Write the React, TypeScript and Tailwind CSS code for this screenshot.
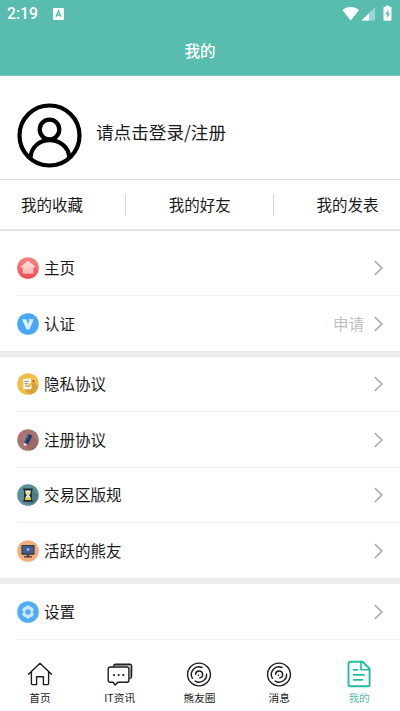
import type { ReactNode } from "react";

const HomeBadge = () => (
  <svg width="22" height="22" viewBox="0 0 22 22">
    <defs>
      <linearGradient id="homeBg" x1="0" y1="0" x2="0" y2="1">
        <stop offset="0" stopColor="#fb8587" />
        <stop offset="1" stopColor="#f2484f" />
      </linearGradient>
      <linearGradient id="homeFg" x1="0" y1="0" x2="0" y2="1">
        <stop offset="0" stopColor="#ffe3e1" />
        <stop offset="1" stopColor="#fdb6b4" />
      </linearGradient>
    </defs>
    <circle cx="11" cy="11" r="10.8" fill="url(#homeBg)" />
    <path
      d="M10.2 4.3a1.2 1.2 0 0 1 1.6 0l6 5c.5.5.2 1.2-.5 1.2h-1v5.2c0 .7-.4 1.1-1.1 1.1H6.8c-.7 0-1.1-.4-1.1-1.1v-5.2h-1c-.7 0-1-.7-.5-1.2z"
      fill="url(#homeFg)"
    />
  </svg>
);

const VerifyBadge = () => (
  <svg width="22" height="22" viewBox="0 0 22 22">
    <circle cx="11" cy="11" r="10.8" fill="#48a7f4" />
    <path
      d="M5 6.2h4.3l1.8 5 1.3-3.4-.8-1.6h5.1l-3.8 9.3c-.3.8-.9 1.1-1.9 1.1s-1.6-.3-1.9-1.1z"
      fill="#d8efff"
    />
  </svg>
);

const NoteBadge = () => (
  <svg width="22" height="22" viewBox="0 0 22 22">
    <circle cx="11" cy="11" r="10.8" fill="#f0bf49" />
    <path d="M14.5 6.5l6.8 6.8A10.8 10.8 0 0 1 13 21.6L6.5 16z" fill="#d9a238" />
    <path d="M6 6l8.2-.4.4 10.3-8.2.5z" fill="#fbf7ea" />
    <path d="M7.6 8.4h4M7.8 10.7h3.5M8 13h3" stroke="#8d8978" strokeWidth="1" />
    <path d="M11.3 13.5l.8-2.3 3.5-3.5 1.4 1.4-3.5 3.7z" fill="#f6c417" />
    <path d="M15.1 8.1l1.2-1 1.3 1.2-1 1.2z" fill="#bd3a2c" />
    <path d="M11.2 13.7l.6-1.3 1 .9z" fill="#3b3426" />
  </svg>
);

const PenBadge = () => (
  <svg width="22" height="22" viewBox="0 0 22 22">
    <circle cx="11" cy="11" r="10.8" fill="#a87370" />
    <path d="M14.5 6l6.6 7.2A10.8 10.8 0 0 1 13 21.6L7 16z" fill="#9b6865" />
    <path d="M11.3 4.8l3.9 1.6-4.5 9.1-3.9-1.8z" fill="#245486" />
    <path d="M13.3 5.6l1.9.8-4.5 9.1-1.9-.9z" fill="#183659" />
    <path d="M6.8 13.7l3.9 1.8-3 1.4-1-.5z" fill="#e7d9ce" />
  </svg>
);

const HourglassBadge = () => (
  <svg width="22" height="22" viewBox="0 0 22 22">
    <circle cx="11" cy="11" r="10.8" fill="#5d8f98" />
    <path d="M15.5 5l5.8 6a10.8 10.8 0 0 1-7.5 10L6.5 17z" fill="#4a7c87" />
    <path d="M7 5.5h8v11.3H7z" fill="#273238" />
    <path d="M8.2 6.5h5.6c0 2.6-.7 3.8-1.8 4.7 1.1.9 1.8 2.1 1.8 4.7H8.2c0-2.6.7-3.8 1.8-4.7-1.1-.9-1.8-2.1-1.8-4.7z" fill="#e6edda" />
    <path d="M9.2 8.5h3.6L11 11zM8.3 15.9c.1-1.9 1.6-2.4 2.7-3.1 1.1.7 2.6 1.2 2.7 3.1z" fill="#e6d42d" />
    <path d="M6.2 4.5h9.6V6H6.2zM6.2 16.1h9.6v1.6H6.2z" fill="#222a2d" />
  </svg>
);

const MonitorBadge = () => (
  <svg width="22" height="22" viewBox="0 0 22 22">
    <circle cx="11" cy="11" r="10.8" fill="#f4ad78" />
    <path d="M4.4 5h13.2v9.8H4.4z" fill="#343b48" />
    <path d="M5.5 6h11v7.2h-11z" fill="#416091" />
    <path d="M9.8 14.8h2.4v1.5H15v1.2H7v-1.2h2.8z" fill="#353b44" />
    <path d="M10.3 8.2l2.6 1.4-2.6 1.5z" fill="#dbeaf7" />
  </svg>
);

const GearBadge = () => (
  <svg width="22" height="22" viewBox="0 0 22 22">
    <circle cx="11" cy="11" r="10.8" fill="#4eacf5" />
    <path
      d="M9.6 5h2.8l.7 1.7 1.8-.2 1.5 2.3-1 1.6v1.2l1 1.6-1.5 2.3-1.8-.2-.7 1.7H9.6l-.7-1.7-1.8.2-1.5-2.3 1-1.6v-1.2l-1-1.6 1.5-2.3 1.8.2z"
      fill="#c9e7ff"
      stroke="#c9e7ff"
      strokeLinejoin="round"
    />
    <circle cx="11" cy="11" r="2.7" fill="#4eacf5" />
  </svg>
);

const HomeIcon = () => (
  <svg width="26" height="26" viewBox="0 0 26 26" fill="none" stroke="#1c1c1c" strokeWidth="1.4" strokeLinejoin="round" strokeLinecap="round">
    <path d="M1.5 13.2L13 2.3l11.5 10.9M4.4 11v11.6c0 .6.3 1 1 1h4.2v-7.8h6.8v7.8h4.2c.7 0 1-.4 1-1V11" />
  </svg>
);

const ChatIcon = () => (
  <svg width="26" height="26" viewBox="0 0 26 26" fill="none" stroke="#1c1c1c" strokeWidth="1.4" strokeLinejoin="round" strokeLinecap="round">
    <path d="M6.8 5.6V5c0-1 .8-1.8 1.8-1.8h14c1.2 0 2 .8 2 2v10c0 1.2-.9 2-1.9 2.2" />
    <path d="M8.2 4.4h12.7c1.5 0 2.4.9 2.4 2.4v11" stroke="#777" strokeWidth="1" />
    <path d="M3.3 6h16.5c1.3 0 2.1.8 2.1 2.1v11.1c0 1.3-.8 2.1-2.1 2.1h-9L8.2 24l-2.1-2.7H3.3c-1.3 0-2.1-.8-2.1-2.1V8.1C1.2 6.8 2 6 3.3 6z" />
    <path d="M7 14h.1M11.6 14h.1M16.2 14h.1" strokeWidth="2.1" />
  </svg>
);

const CircleIcon = () => (
  <svg width="26" height="26" viewBox="0 0 26 26" fill="none" stroke="#1c1c1c" strokeWidth="1.4" strokeLinecap="round">
    <circle cx="13" cy="13.5" r="11.4" />
    <path d="M16 6.5A7.6 7.6 0 0 0 6.4 17.3M9.2 20.1A7.6 7.6 0 0 0 20.6 13.2" />
    <path d="M9.6 13.3A3.5 3.5 0 1 1 13.8 16.9" />
    <path d="M12.5 14.3h.1" strokeWidth="1.5" />
  </svg>
);

const DocIcon = () => (
  <svg width="26" height="28" viewBox="0 0 26 28" fill="none" stroke="#1fbd9f" strokeWidth="1.9" strokeLinejoin="round" strokeLinecap="round">
    <path d="M4.3 1.8h12.2l7.1 7v15.6c0 1.1-.7 1.8-1.8 1.8H4.3c-1.1 0-1.8-.7-1.8-1.8V3.6c0-1.1.7-1.8 1.8-1.8z" />
    <path d="M15 2.2v7.6h8" strokeWidth="1.6" />
    <path d="M7.5 9.9h4M7.5 14.9h10.5M7.5 19.9h9" strokeWidth="1.6" />
  </svg>
);

const groups = [
  [
    { label: "主页", icon: <HomeBadge />, height: "h-[55px]" },
    { label: "认证", icon: <VerifyBadge />, extra: "申请", height: "h-[55px]" },
  ],
  [
    { label: "隐私协议", icon: <NoteBadge />, height: "h-[55px]" },
    { label: "注册协议", icon: <PenBadge />, height: "h-14" },
    { label: "交易区版规", icon: <HourglassBadge />, height: "h-[55px]" },
    { label: "活跃的熊友", icon: <MonitorBadge />, height: "h-[55px]" },
  ],
  [{ label: "设置", icon: <GearBadge />, height: "h-14" }],
];

const tabs = [
  { label: "首页", icon: <HomeIcon /> },
  { label: "IT资讯", icon: <ChatIcon /> },
  { label: "熊友圈", icon: <CircleIcon /> },
  { label: "消息", icon: <CircleIcon /> },
  { label: "我的", icon: <DocIcon />, active: true },
];

function Row({ label, icon, extra, height, last }: { label: string; icon: ReactNode; extra?: string; height: string; last: boolean }) {
  return (
    <div className={`ml-[17px] flex items-center pr-4 ${height} ${last ? "" : "border-b border-[#f0f0f0]"}`}>
      {icon}
      <span className="ml-[5px] flex-1 text-[15.5px]">{label}</span>
      {extra && <span className="mr-[9px] text-[15.5px] text-[#c0c0c0]">{extra}</span>}
      <svg width="11" height="16" viewBox="0 0 11 16" fill="none" stroke="#aaa" strokeWidth="1.7">
        <path d="M1.8 1l7 7-7 7" />
      </svg>
    </div>
  );
}

export default function App() {
  return (
    <div className="flex h-[711px] w-[400px] flex-col overflow-hidden bg-white font-['Noto_Sans_CJK_SC',sans-serif] text-[#1a1a1a]">
      <header className="h-[76px] shrink-0 border-b border-[#7accbf] bg-[#58bdad] text-white">
        {/* Status bar */}
        <div className="flex h-7 items-center px-[7px]">
          <span className="w-[46px] font-[Roboto,sans-serif] text-[15.7px] font-medium leading-7">2:19</span>
          <svg width="11" height="12" viewBox="0 0 11 12">
            <rect width="11" height="12" rx="1.2" fill="#fff" />
            <path d="M3 8.8l2.5-6 2.5 6M3.9 7h3.2" fill="none" stroke="#58bdad" strokeWidth="1.4" />
          </svg>
          <svg className="ml-auto" width="51" height="18" viewBox="0 0 51 18" fill="#fff">
            <path d="M0.5 5C5 .9 12.5 .9 17 5L8.7 15.5z" />
            <path d="M33 2.2V15.5H19.5z" opacity=".4" />
            <path d="M27 8.2V15.5H19.5z" />
            <path d="M44 .5h3v1.2h1.5c.7 0 1 .4 1 1v12c0 .7-.3 1-1 1h-6c-.7 0-1-.3-1-1v-12c0-.6.3-1 1-1H44z" />
            <path d="M46.4 4.4l-3.1 4.8h1.8v3.9l2.9-4.8h-1.8z" fill="#58bdad" />
          </svg>
        </div>
        <h1 className="text-center text-[15.5px] font-medium leading-[45px]">我的</h1>
      </header>

      {/* Login */}
      <section className="flex h-[104px] shrink-0 items-center border-b border-[#d9d9d9] pl-[17px] pt-4">
        <svg width="66" height="66" viewBox="0 0 66 66" fill="none" stroke="#000" strokeWidth="4.2">
          <circle cx="32.5" cy="32.5" r="30" />
          <circle cx="32.5" cy="26.5" r="9.8" />
          <path d="M13.7 54.5V53C14.8 44 22.4 37.2 32.5 37.2S51 44 52.1 53V54.5" />
        </svg>
        <span className="mb-1.5 ml-[13px] text-[17.6px]">请点击登录/注册</span>
      </section>

      <section className="flex h-[51px] shrink-0 items-center justify-between border-b-2 border-[#e6e6e6] pl-[21px] pr-[21.5px] text-[15.5px]">
        <span>我的收藏</span>
        <i className="h-[22px] w-px bg-[#d5d5d5]" />
        <span>我的好友</span>
        <i className="h-[22px] w-px bg-[#d5d5d5]" />
        <span>我的发表</span>
      </section>

      <main className="flex-1 pt-2.5">
        {groups.map((rows, g) => (
          <div key={g} className={g < 2 ? "border-b-[6px] border-[#ececec]" : ""}>
            {rows.map((row, i) => (
              <Row key={row.label} {...row} last={g < 2 && i === rows.length - 1} />
            ))}
          </div>
        ))}
      </main>

      <nav className="mr-px grid h-[52px] shrink-0 grid-cols-5">
        {tabs.map((tab) => (
          <div key={tab.label} className="flex flex-col items-center">
            <div className="flex h-[30px] items-center">{tab.icon}</div>
            <span className={`text-[10.7px] leading-[17px] ${tab.active ? "text-[#58bdad]" : ""}`}>{tab.label}</span>
          </div>
        ))}
      </nav>
    </div>
  );
}
